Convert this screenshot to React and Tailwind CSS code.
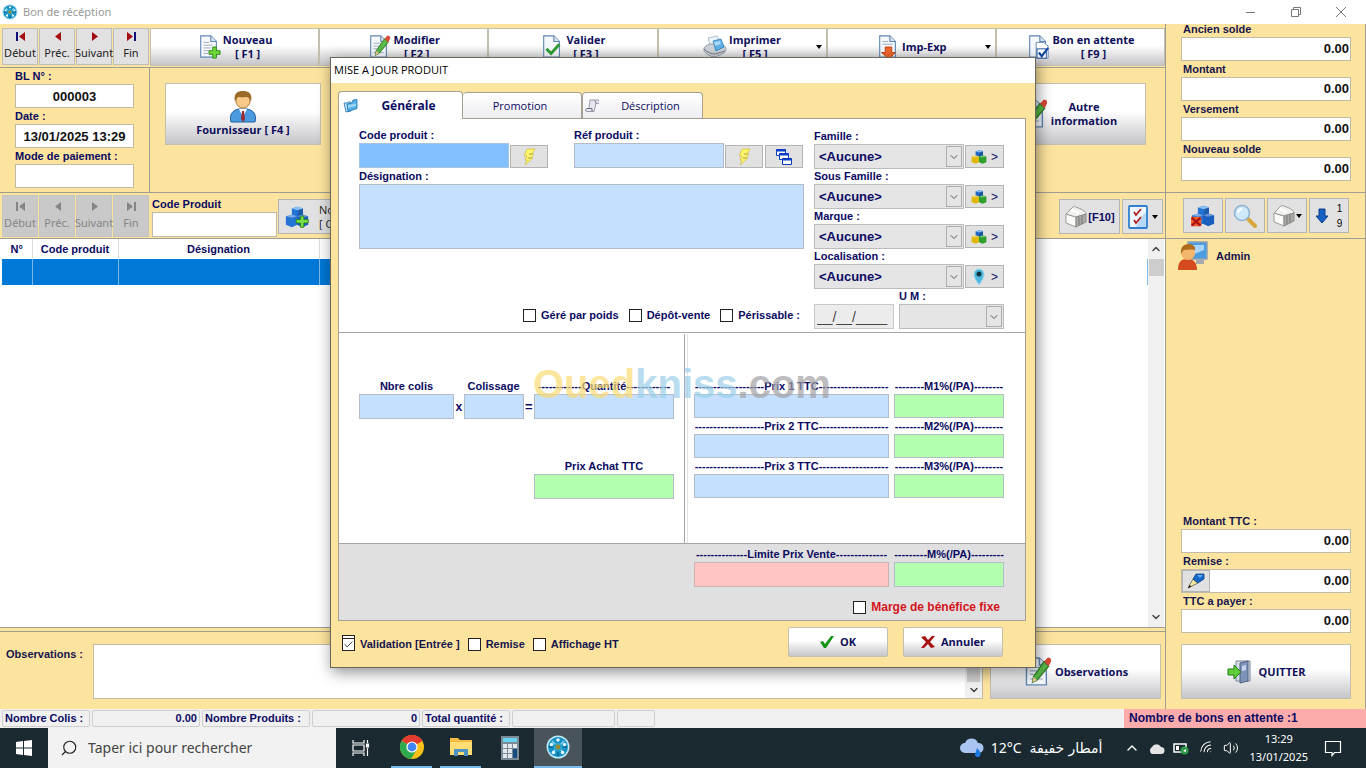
import React, { useId } from "react";
import { Check, ChevronDown, ChevronUp, Search, Wifi, Volume2 } from "lucide-react";
import clsx from "clsx";

const toolbarActions = [
  { name: "Nouveau", shortcut: "[ F1 ]", icon: "add" },
  { name: "Modifier", shortcut: "[ F2 ]", icon: "edit" },
  { name: "Valider", shortcut: "[ F3 ]", icon: "check" },
  { name: "Imprimer", shortcut: "[ F5 ]", icon: "printer", menu: true },
  { name: "Imp-Exp", icon: "export", menu: true },
  { name: "Bon en attente", shortcut: "[ F9 ]", icon: "pending" },
];

const balances = ["Ancien solde", "Montant", "Versement", "Nouveau solde"];
const families = ["Famille :", "Sous Famille :", "Marque :", "Localisation :"];
const prices = ["1", "2", "3"];

const glossy = "border border-[#c3bfae] bg-linear-to-b from-white from-45% to-[#c6c6ca] font-['Open_Sans',sans-serif] text-[11px] leading-[14px] font-bold text-[#0e0e5a]";
const flat = "border border-[#b4b4b4] bg-[#e1e1e1]";

/* ---------- icons ---------- */

const Globe = ({ className }) => (
  <svg viewBox="0 0 24 24" className={className}>
    <circle cx="12" cy="12" r="11.5" fill="#bfe6f5" />
    <circle cx="12" cy="12" r="10" fill="#1593c7" />
    <path d="M12 3v4M12 17v4M3 12h4M17 12h4" stroke="#0d6f9c" strokeWidth="2" />
    <path d="M6 6l4 4M14 14l4 4M18 6l-4 4M10 14l-4 4" stroke="#8fd3ee" strokeWidth="1.5" />
    <circle cx="12" cy="12" r="4" fill="#2da6cf" />
    <circle cx="12" cy="12" r="2.4" fill="#9a8b2e" />
    <g fill="#e8f9ff">
      <circle cx="12" cy="5" r="1.7" />
      <circle cx="18.500" cy="9.500" r="1.7" />
      <circle cx="16.500" cy="17.500" r="1.7" />
      <circle cx="7.500" cy="17.500" r="1.7" />
      <circle cx="5.500" cy="9.500" r="1.7" />
    </g>
  </svg>
);

const Sheet = ({ kind, className = "size-6" }) => (
  <svg viewBox="0 0 24 26" className={className}>
    <path d="M3 1h11l6 6v17H3z" fill="#f6f9fc" stroke="#5f86b2" strokeWidth="1.2" />
    <path d="M14 1v6h6" fill="#dbe7f3" stroke="#5f86b2" strokeWidth="1.2" />
    {kind === "add" && (
      <>
        <path d="M6 8h6M6 11h10M6 14h8M6 17h6M6 20h5" stroke="#9aa9ba" />
        <path d="M16 13h4v4h4v4h-4v4h-4v-4h-4v-4h4z" fill="#6fd63a" stroke="#2c8a17" />
      </>
    )}
    {kind === "edit" && (
      <>
        <path d="M6 9h8M6 12h6M6 15h4M6 19h11" stroke="#9aa9ba" />
        <path d="M18 4l4 4-10 12-4 2 1-5z" fill="#58b947" stroke="#2c7a20" />
        <path d="M18 4l2-2a2 2 0 0 1 4 2l-2 4z" fill="#d8473a" />
        <path d="M9 17l3 3-4 2z" fill="#f0c896" />
      </>
    )}
    {kind === "check" && <path d="M6 15l5 5 9-10" fill="none" stroke="#2f9e34" strokeWidth="3.2" />}
    {kind === "export" && (
      <>
        <path d="M6 7h6M6 10h11" stroke="#9aa9ba" />
        <path d="M9 13h7v6h4l-7 7-8-7h4z" fill="#f2662b" stroke="#c2410c" />
      </>
    )}
    {kind === "pending" && (
      <>
        <path d="M10 8h8l5 4v13H10z" fill="#fff" stroke="#5f86b2" />
        <rect x="11" y="15" width="10" height="10" fill="#fff" stroke="#1d4e9b" />
        <path d="M13 19l3 4 7-9" fill="none" stroke="#14489c" strokeWidth="2.4" />
      </>
    )}
  </svg>
);

const Printer = ({ className = "size-6" }) => (
  <svg viewBox="0 0 24 24" className={className}>
    <path d="M5 3l9-2 4 8-10 4z" fill="#eef4fa" stroke="#9fb3c8" strokeWidth=".8" />
    <path d="M1 13c2-3 5-4 8-4l11 1c2 1 3 3 3 5l-2 3-9 4c-4 0-9-3-11-6z" fill="#cdd3da" stroke="#848d97" strokeWidth=".8" />
    <path d="M1 14c3 3 7 5 11 5l10-3" fill="none" stroke="#727b86" />
    <path d="M10 6l8-2 3 8-8 4z" fill="#5fb1e8" stroke="#2e7fb9" strokeWidth=".8" />
    <path d="M11 7l6-1 1 3-6 2z" fill="#a9d8f7" />
  </svg>
);

const Person = () => (
  <svg viewBox="0 0 28 32" className="h-8 w-7">
    <path d="M2 31c-2-8 2-12 8-13h8c6 1 10 5 8 13z" fill="#4a9be0" stroke="#1f5f9f" />
    <path d="M10 18l4 8 4-8z" fill="#fff" />
    <path d="M13 20h2l1 8-2 3-2-3z" fill="#9b2a34" />
    <circle cx="14" cy="10" r="7" fill="#f7c98b" stroke="#bd7c35" />
    <path d="M6 11C4 2 9 0 14 0s10 2 8 11c-1-4-3-5-5-5-4 1-7 0-8 0-2 1-2 3-3 5z" fill="#9a6a26" />
  </svg>
);

const Cubes = ({ mark, colors = ["#2474d6", "#2474d6", "#1a5ec0"], className = "size-6" }) => (
  <svg viewBox="0 0 28 26" className={className}>
    <path d="M8 3l7-2 6 2v10l-6 2-7-2z" fill={colors[0]} />
    <path d="M8 3l7-2 6 2-6 2z" fill="#8cc1f7" />
    <path d="M15 5l6-2v10l-6 2z" fill="#000" opacity=".2" />
    <path d="M1 12l7-2 6 2v10l-6 3-7-3z" fill={colors[1]} />
    <path d="M1 12l7-2 6 2-6 2z" fill="#fff" opacity=".4" />
    <path d="M14 12l7-2 6 2v10l-7 3-6-3z" fill={colors[2]} />
    <path d="M14 12l7-2 6 2-7 2z" fill="#fff" opacity=".35" />
    {mark === "add" && <path d="M18 12h4v4h5v4h-5v5h-4v-5h-5v-4h5z" fill="#7be04a" stroke="#227d12" />}
    {mark === "delete" && (
      <>
        <rect y="14" width="12" height="11" fill="#ef5a32" />
        <path d="M1 15l10 9M11 15L1 24" stroke="#a80f0f" strokeWidth="2.5" />
      </>
    )}
  </svg>
);

const Box = () => (
  <svg viewBox="0 0 24 24" className="size-6 shrink-0">
    <path d="M2 9l10 3v10L2 18z" fill="#fbfbfa" stroke="#9b9b97" />
    <path d="M2 9l5-5c1-2 3-3 5-2l5 2c2 1 5 3 5 5l-10 3z" fill="#f0f0ee" stroke="#9b9b97" />
    <path d="M12 12l10-3v8l-10 5z" fill="#a9aaa5" stroke="#8c8c88" />
    <path d="M15 12v8M18 11v8" stroke="#7a7b76" />
    <path d="M7 5l8 3" stroke="#fff" strokeWidth="2" />
  </svg>
);

const Bolt = () => (
  <svg viewBox="0 0 16 18" className="h-[18px] w-4">
    <path d="M6 1h8l-3 5h2l-3 4h2l-8 7 2-5H4l2-4H3z" fill="#fdf56a" stroke="#d2bf45" strokeWidth=".8" />
    <path d="M11 6H8M10 10H7" stroke="#8f8540" strokeWidth=".8" />
  </svg>
);

const Windows = () => (
  <svg viewBox="0 0 18 18" className="size-[18px]" fill="#fff" stroke="#0b3cc4">
    <path d="M1.500 1.500h9v6h-9z" />
    <path d="M1 2.500h10" strokeWidth="2" />
    <path d="M4.500 5.500h9v6h-9z" />
    <path d="M4 6.500h10" strokeWidth="2" />
    <path d="M7.500 10.500h9v6h-9z" />
    <path d="M7 11.500h10" strokeWidth="2" />
  </svg>
);

const Pin = () => (
  <svg viewBox="0 0 16 18" className="h-[18px] w-4">
    <path d="M8 17C4 11 3 9 3 6a5 5 0 0 1 10 0c0 3-1 5-5 11z" fill="#4db8dc" stroke="#a4dbef" />
    <circle cx="8" cy="6" r="2.5" fill="#0c3346" />
  </svg>
);

const Checklist = () => (
  <svg viewBox="0 0 20 24" className="h-6 w-5">
    <rect x="1" y="1" width="18" height="22" rx="1" fill="#eef7ff" stroke="#2f7ed0" strokeWidth="1.8" />
    <path d="M13 12l5-5v15H8z" fill="#8fc3ee" opacity=".6" />
    <path d="M6 7l2 3 5-6M6 15l2 3 5-6" fill="none" stroke="#b32020" strokeWidth="1.8" />
  </svg>
);

const Magnifier = () => (
  <svg viewBox="0 0 24 24" className="size-6">
    <path d="M15 15l7 7" stroke="#d7a83b" strokeWidth="4" strokeLinecap="round" />
    <circle cx="9" cy="9" r="7.5" fill="#cfe9fb" stroke="#8fb2d4" strokeWidth="1.6" />
    <path d="M5 9a4 4 0 0 1 4-4" stroke="#fff" strokeWidth="2" fill="none" />
  </svg>
);

const ArrowDownBlue = () => (
  <svg viewBox="0 0 14 16" className="h-4 w-3.5">
    <path d="M4 1h6v7h3l-6 7-6-7h3z" fill="#1461c4" stroke="#0c3f87" />
  </svg>
);

const UserPc = () => (
  <svg viewBox="0 0 30 30" className="size-[30px]">
    <path d="M10 1h19v17H12z" fill="#4c9de0" stroke="#8fa1b4" strokeWidth="1.5" />
    <path d="M13 4h13v5l-12 5z" fill="#a9d5f7" />
    <path d="M18 19h8v4h-8z" fill="#a3a9b0" />
    <path d="M0 29c0-8 3-11 9-11s10 3 10 11z" fill="#d4491d" />
    <circle cx="10" cy="12" r="7" fill="#f3b66a" />
    <path d="M3 13C2 5 7 3 11 3s7 3 6 6c-4-1-8 0-11 0-1 1-2 2-3 4z" fill="#b06c1c" />
  </svg>
);

const Door = () => (
  <svg viewBox="0 0 24 24" className="size-6">
    <path d="M9 1h14v20H9z" fill="#d8dde6" stroke="#7a869a" />
    <path d="M13 3l8-2v20l-8 2z" fill="#7f93b8" stroke="#4f5f80" />
    <path d="M15 6l4-1v5l-4 1z" fill="#c7d6ee" />
    <path d="M1 9h6V5l7 7-7 7v-4H1z" fill="#5fce3a" stroke="#237a12" />
  </svg>
);

const Marker = () => (
  <svg viewBox="0 0 18 16" className="h-4 w-[18px]">
    <path d="M1 15l5-9 5 4z" fill="#f5e7a0" stroke="#5d5d4d" strokeWidth=".8" />
    <path d="M6 6l3-5 8 0v5l-6 4z" fill="#1668c9" stroke="#0e3f80" strokeWidth=".8" />
    <path d="M10 2l6 0-3 3z" fill="#5fa8ee" />
    <path d="M1 15l1.500-3 2 1.500z" fill="#111" />
  </svg>
);

const Folder = () => (
  <svg viewBox="0 0 16 14" className="h-3.5 w-4">
    <path d="M1 4l3 0 1-1 3 0v9l-5 1z" fill="#bfe2f7" stroke="#1d72ad" strokeWidth=".8" />
    <path d="M4 5l5-1 1-3 4-.500v9L5 12.500z" fill="#55b0e6" stroke="#1d72ad" strokeWidth=".8" />
    <path d="M5 6l8-1.500v2.500L5 9z" fill="#9dd5f5" />
  </svg>
);

const Scroll = () => (
  <svg viewBox="0 0 14 14" className="size-3.5">
    <path d="M5 1h7a1.500 1.500 0 0 1 1 3.500h-2L9 12.500H2a1.500 1.500 0 0 1 0-3h2z" fill="#e6e6ee" stroke="#85859a" strokeWidth=".8" />
    <path d="M2 9.500h5v3M11 4.500l-1-3" stroke="#55556a" fill="none" strokeWidth=".8" />
  </svg>
);

const Caret = () => <span className="border-x-3 border-t-4 border-x-transparent border-t-black" />;

/* ---------- form parts ---------- */

const Nav = ({ disabled }) => (
  <div className="flex gap-px pl-0.5">
    {[
      ["Début", "M3 0v9M12 0v9L6 4.5z"],
      ["Préc.", "M11 0v9L5 4.5z"],
      ["Suivant", "M5 0v9l6-4.5z"],
      ["Fin", "M12 0v9M3 0v9l6-4.5z"],
    ].map(([name, d]) => (
      <button
        key={name}
        disabled={disabled}
        className={clsx(
          "flex w-9 flex-col items-center justify-center gap-1 border font-['Noto_Sans',sans-serif] text-[11px] leading-4 font-normal",
          disabled ? "h-[42px] border-[#c4c4c4] bg-[#c9c9c9] text-[#858585]" : "h-[37px] border-[#bdbdbd] bg-[#e1e1e1] text-[#222]"
        )}
      >
        <svg viewBox="0 0 15 9" className="h-[9px] w-[15px]">
          <path d={d} fill={disabled ? "#858585" : "#a40c12"} />
          {name === "Début" && <path d="M3 0h2v9H3z" fill={disabled ? "#858585" : "#10107a"} />}
          {name === "Fin" && <path d="M10 0h2v9h-2z" fill={disabled ? "#858585" : "#10107a"} />}
        </svg>
        {name}
      </button>
    ))}
  </div>
);

const Field = ({ label, className, box = "border-[#b3bcc6] bg-[#c4e0fe]", size = "h-[25px]", center, ...rest }) => {
  const id = useId();
  return (
    <div className={clsx("flex flex-col", className)}>
      <label htmlFor={id} className={clsx("h-4 overflow-hidden leading-4 whitespace-nowrap", center && "flex justify-center")}>
        {label}
      </label>
      <input id={id} className={clsx("w-full border px-1 outline-none", size, box)} {...rest} />
    </div>
  );
};

const dashed = (text, n) => "-".repeat(n) + text + "-".repeat(n);

const Amount = ({ label, children }) => {
  const id = useId();
  return (
    <div className="h-10 text-[#15154e]">
      <label htmlFor={id} className="block h-4 pl-0.5 leading-4">{label}</label>
      <div className="flex h-6 border border-[#c0bba8] bg-white">
        {children}
        <input id={id} defaultValue="0.00" className="w-full min-w-0 pr-px text-right text-[13px] text-[#111] outline-none" />
      </div>
    </div>
  );
};

const Combo = ({ id, value, className }) => (
  <div className={clsx("relative h-[25px]", className)}>
    <select id={id} defaultValue={value} className="h-full w-full appearance-none border border-[#bcbcbc] bg-[#e5e5e5] pl-1 text-[13px] outline-none">
      <option>{value}</option>
    </select>
    <span className="pointer-events-none absolute inset-y-0.5 right-0.5 flex w-4 items-center justify-center border border-[#adadad] bg-[#e5e5e5]">
      <ChevronDown className="size-3 text-[#555]" />
    </span>
  </div>
);

const Tick = ({ label, checked, className }) => (
  <label className={clsx("flex items-center gap-[5px] whitespace-nowrap", className)}>
    <span className="relative size-[13px]">
      {checked && <span className="absolute -top-[3px] left-0 h-1 w-[13px] border border-[#222] bg-white" />}
      <input type="checkbox" defaultChecked={checked} className="block size-[13px] appearance-none border border-[#222] bg-white" />
      {checked && <Check className="pointer-events-none absolute inset-px size-[11px] text-[#222]" />}
    </span>
    {label}
  </label>
);

const StatusCell = ({ className, children }) => (
  <div className={clsx("h-[17px] rounded-xs border border-[#cfcfcf] px-0.5 leading-[15px] whitespace-nowrap", className)}>{children}</div>
);

/* ---------- window areas ---------- */

const LeftPane = () => (
  <div className="flex min-w-0 flex-1 flex-col border-r border-[#9f9c92]">
    <div className="flex h-11 items-start border-b border-[#9f9c92] pt-1">
      <Nav />
      <div className="ml-px flex flex-1">
        {toolbarActions.map((action) => (
          <button key={action.name} className={clsx(glossy, "relative flex h-[38px] flex-1 items-center justify-center gap-0.5 border-[#b8b8b8]")}>
            {action.icon === "printer" ? <Printer /> : <Sheet kind={action.icon} />}
            <span>
              {action.name}
              {action.shortcut && <span className="block">{action.shortcut}</span>}
            </span>
            {action.menu && <span className="absolute right-1 flex"><Caret /></span>}
          </button>
        ))}
      </div>
    </div>

    <div className="flex h-[125px] border-b border-[#9f9c92]">
      <div className="flex w-[150px] flex-col border-r border-[#9f9c92] px-[15px]">
        <Field label="BL N° :" size="h-6" box="border-[#c0bba8] bg-white text-center text-[13px] text-[#111]" defaultValue="000003" />
        <Field label="Date :" size="h-6" box="border-[#c0bba8] bg-white text-center text-[13px] text-[#111]" defaultValue="13/01/2025 13:29" />
        <Field label="Mode de paiement :" size="h-6" box="border-[#c0bba8] bg-white" />
      </div>
      <div className="flex flex-1 justify-between py-[15px] pr-[19px] pl-[15px]">
        <button className={clsx(glossy, "flex h-[62px] w-[156px] flex-col items-center justify-center")}>
          <Person />
          Fournisseur [ F4 ]
        </button>
        <button className={clsx(glossy, "flex h-[62px] w-[156px] items-center justify-center gap-1")}>
          <Sheet kind="edit" className="h-8 w-7" />
          <span>Autre<br />information</span>
        </button>
      </div>
    </div>

    <div className="flex h-[46px] items-start border-b border-[#9f9c92] pt-0.5">
      <Nav disabled />
      <Field label="Code Produit" className="ml-[3px] w-[125px] pt-px" box="border-[#c0bba8] bg-white" />
      <button className={clsx(flat, "mt-1 ml-px flex h-[35px] w-40 items-center gap-2.5 pl-1.5 text-left font-['Open_Sans',sans-serif] text-[11px] leading-[14px] font-normal text-[#222]")}>
        <Cubes mark="add" />
        <span>Nouveau<br />[ Ctrl+N ]</span>
      </button>
      <div className="mt-1 mr-0.5 ml-auto flex gap-0.5">
        <button className={clsx(flat, "flex h-[35px] w-[61px] items-center justify-center")}><Box />[F10]</button>
        <button className={clsx(flat, "flex h-[35px] w-[41px] items-center justify-center gap-1")} aria-label="Sélection">
          <Checklist />
          <Caret />
        </button>
      </div>
    </div>

    <div className="flex flex-1 border-b border-[#9f9c92] bg-white">
      <div className="flex-1">
        <table className="w-full table-fixed border-l-2 border-white">
          <colgroup>
            <col className="w-[31px]" />
            <col className="w-[86px]" />
            <col className="w-[201px]" />
            <col />
          </colgroup>
          <thead>
            <tr className="h-5 divide-x divide-[#dcdcdc]">
              <th>N°</th>
              <th>Code produit</th>
              <th>Désignation</th>
              <th />
            </tr>
          </thead>
          <tbody>
            {/* the selected line stops where the last column does */}
            <tr className="h-[26px] divide-x divide-[#7db8ea]">
              <td className="bg-[#0078d7]" />
              <td className="bg-[#0078d7]" />
              <td className="bg-[#0078d7]" />
              <td className="bg-linear-to-r from-[#0078d7] from-80% to-white to-80%" />
            </tr>
          </tbody>
        </table>
      </div>
      <div className="mr-px flex w-4 flex-col items-center bg-[#f0f0f0]">
        <ChevronUp className="my-1 size-3 text-[#444]" strokeWidth={3} />
        <div className="h-[17px] w-[15px] bg-[#cdcdcd]" />
        <ChevronDown className="mt-auto mb-1 size-3 text-[#444]" strokeWidth={3} />
      </div>
    </div>
    <div className="h-1 border-b border-[#9f9c92]" />

    <div className="flex h-[77px] items-start pt-3 pr-1">
      <label htmlFor="observations" className="w-[93px] py-0.5 pl-1.5 text-[#15154e]">Observations :</label>
      <div className="flex h-[55px] flex-1 border border-[#c0bba8] bg-white">
        <textarea id="observations" className="flex-1 resize-none outline-none" />
        <div className="flex w-[17px] flex-col items-center justify-end bg-[#f0f0f0]">
          <div className="h-8 w-[13px] bg-[#cdcdcd]" />
          <ChevronDown className="my-0.5 size-3 text-[#444]" strokeWidth={3} />
        </div>
      </div>
      <button className={clsx(glossy, "ml-[7px] flex h-[55px] w-[171px] items-center justify-center gap-1")}>
        <Sheet kind="edit" className="h-8 w-7" />
        Observations
      </button>
    </div>
  </div>
);

const RightPane = () => (
  <div className="flex w-[200px] flex-col border-r border-[#9f9c92]">
    <div className="h-[169px] border-b border-[#9f9c92] pr-[14px] pl-[15px]">
      <div className="-mt-[3px]">
        {balances.map((label) => <Amount key={label} label={label} />)}
      </div>
    </div>
    <div className="flex h-[46px] items-center justify-center gap-0.5 border-b border-[#9f9c92]">
      <button className={clsx(flat, "flex h-[35px] w-10 items-center justify-center")} aria-label="Supprimer"><Cubes mark="delete" /></button>
      <button className={clsx(flat, "flex h-[35px] w-10 items-center justify-center")} aria-label="Rechercher"><Magnifier /></button>
      <button className={clsx(flat, "flex h-[35px] w-10 items-center justify-center")} aria-label="Produit"><Box /><Caret /></button>
      <button className={clsx(flat, "flex h-[35px] w-10 items-center justify-center gap-2 text-[10px] leading-[15px] font-normal text-black")}>
        <ArrowDownBlue />
        <span>1<br />9</span>
      </button>
    </div>
    <div className="flex items-center gap-2 pt-0.5 pl-3 text-[#15154e]">
      <UserPc />
      Admin
    </div>
    <div className="mt-auto h-[196px] pr-[14px] pl-[15px]">
      <Amount label="Montant TTC :" />
      <Amount label="Remise :">
        <button className={clsx(flat, "flex w-7 shrink-0 items-center justify-center")} aria-label="Modifier la remise"><Marker /></button>
      </Amount>
      <Amount label="TTC a payer :" />
      <button className={clsx(glossy, "mt-[11px] flex h-[55px] w-full items-center justify-center gap-2")}>
        <Door />
        QUITTER
      </button>
    </div>
  </div>
);

const ProductDialog = () => (
  <div className="absolute top-[57px] left-1/2 w-[706px] -translate-x-1/2 border border-[#6b675a] bg-[#fde49e] text-[#0a0a62] shadow-[2px_4px_14px_rgba(0,0,0,0.45)]">
    <h2 className="h-[25px] bg-white pl-[3px] font-['Open_Sans',sans-serif] text-[11px] leading-6 font-normal text-black">MISE A JOUR PRODUIT</h2>

    <div className="flex items-end px-[7px] pt-2">
      <button className="z-10 -mb-px flex h-7 w-[125px] items-center rounded-t-sm border border-b-0 border-[#a5a294] bg-white pl-1">
        <Folder />
        <span className="flex-1 pr-1 font-['Open_Sans',sans-serif] text-xs">Générale</span>
      </button>
      <button className="h-[26px] w-[119px] rounded-t-sm border border-b-0 border-l-0 border-[#a5a294] bg-linear-to-b from-white to-[#eeeef2] pr-1 font-['Open_Sans',sans-serif] text-[11px] font-normal">Promotion</button>
      <button className="flex h-[26px] w-[121px] items-center rounded-t-sm border border-b-0 border-[#a5a294] bg-linear-to-b from-white to-[#eeeef2] pl-0.5 font-['Open_Sans',sans-serif] text-[11px] font-normal">
        <Scroll />
        <span className="flex-1">Déscription</span>
      </button>
    </div>

    <div className="mr-[9px] ml-[7px] border border-[#a5a294] bg-white">
      <div className="flex h-[214px] gap-2.5 border-b border-[#a5a5a5] pt-[9px] pr-[21px] pl-5">
        <div className="flex flex-1 flex-col">
          <div className="flex h-10 items-end">
            <Field label="Code produit :" className="w-[150px]" box="border-[#a5c3e2] bg-[#82bfff]" />
            <button className={clsx(flat, "ml-px flex h-[23px] w-[38px] items-center justify-center")} aria-label="Générer le code"><Bolt /></button>
            <Field label="Réf produit :" className="ml-[26px] w-[150px]" />
            <button className={clsx(flat, "ml-px flex h-[23px] w-[38px] items-center justify-center")} aria-label="Générer la référence"><Bolt /></button>
            <button className={clsx(flat, "ml-0.5 flex h-[23px] w-[38px] items-center justify-center")} aria-label="Références"><Windows /></button>
          </div>
          <label htmlFor="designation" className="h-4 leading-4">Désignation :</label>
          <textarea id="designation" className="h-[65px] resize-none border border-[#b3bcc6] bg-[#c4e0fe] outline-none" />
          <div className="mt-auto mb-[9px] flex justify-end gap-2.5 pr-1">
            <Tick label="Géré par poids" />
            <Tick label="Dépôt-vente" />
            <Tick label="Périssable :" />
          </div>
        </div>
        <div className="w-[190px]">
          {families.map((label) => (
            <div key={label} className="h-10">
              <label htmlFor={label} className="block h-4 leading-4">{label}</label>
              <div className="flex items-center gap-px">
                <Combo id={label} value="<Aucune>" className="w-[150px]" />
                <button className={clsx(flat, "flex h-[23px] flex-1 items-center justify-center gap-1 text-xs font-normal")}>
                  {label === "Localisation :" ? <Pin /> : <Cubes className="size-4" colors={["#2068c8", "#e0b80c", "#2f9e2c"]} />}
                  &gt;
                </button>
              </div>
            </div>
          ))}
          <div className="flex items-end gap-[5px]">
            <input aria-label="Date de péremption" defaultValue="__/__/____" className="h-[25px] w-20 border border-[#c8c8c8] bg-[#ececec] px-0.5 text-sm font-normal text-[#444] outline-none" />
            <div className="flex-1">
              <label htmlFor="um" className="block h-4 leading-4">U M :</label>
              <Combo id="um" value="" />
            </div>
          </div>
        </div>
      </div>

      <div className="flex h-[210px] pt-px">
        <div className="w-[346px] border-r border-[#a5a5a5] pt-11 pr-2.5 pl-5">
          <div className="flex items-end justify-between">
            <Field center label="Nbre colis" className="w-[95px]" />
            <span className="pb-1 text-xs">x</span>
            <Field center label="Colissage" className="w-[60px]" />
            <span className="pb-1 text-[13px]">=</span>
            <Field center label={dashed("Quantité", 12)} className="w-[140px]" />
          </div>
          <Field center label="Prix Achat TTC" className="mt-[39px] ml-auto w-[140px]" box="border-[#b3bcc6] bg-[#b5ffb0]" />
        </div>
        <div className="ml-0.5 flex-1 border-l border-[#e4e4e4] pt-11 pr-[21px] pl-1.5">
          {prices.map((n) => (
            <div key={n} className="flex h-10 gap-[5px]">
              <Field center label={dashed(`Prix ${n} TTC`, 19)} className="w-[195px]" />
              <Field center label={dashed(`M${n}%(/PA)`, 8)} className="flex-1" box="border-[#b3bcc6] bg-[#b5ffb0]" />
            </div>
          ))}
        </div>
      </div>

      <div className="flex h-[77px] flex-col items-end border-t border-[#a5a5a5] bg-[#e0e0e0] pt-0.5 pr-[21px]">
        <div className="flex w-[310px] gap-[5px]">
          <Field center label={dashed("Limite Prix Vente", 14)} className="w-[195px]" box="border-[#c9b3b3] bg-[#ffc4c4]" />
          <Field center label={dashed("M%(/PA)", 9)} className="flex-1" box="border-[#b3bcc6] bg-[#b5ffb0]" />
        </div>
        <Tick label="Marge de bénéfice fixe" className="mt-3 mr-1 text-xs text-[#d41420]" />
      </div>
    </div>

    <div className="flex h-[46px] items-center justify-between pr-8 pl-[11px] text-[#15154e]">
      <div className="flex gap-2">
        <Tick label="Validation [Entrée ]" checked />
        <Tick label="Remise" />
        <Tick label="Affichage HT" />
      </div>
      <div className="flex gap-[15px] pb-1">
        <button className={clsx(glossy, "flex h-[30px] w-[100px] items-center justify-center gap-1.5 rounded-xs")}>
          <svg viewBox="0 0 14 12" className="h-3 w-3.5"><path d="M0 6l3-1 2 3 6-8h3L6 12H4z" fill="#149414" /></svg>
          OK
        </button>
        <button className={clsx(glossy, "flex h-[30px] w-[100px] items-center justify-center gap-1.5 rounded-xs")}>
          <svg viewBox="0 0 14 12" className="h-3 w-3.5"><path d="M0 1l4-1 3 4 4-4h3L9 6l5 5-4 1-3-4-4 4H0l5-6z" fill="#a80f0f" /></svg>
          Annuler
        </button>
      </div>
    </div>

    <div aria-hidden="true" className="pointer-events-none absolute top-[304px] left-[202px] font-['Liberation_Sans',sans-serif] text-[40px] leading-[44px] font-bold opacity-70">
      <span className="text-[#fbdc74]">Oued</span>
      <span className="text-[#9ccfe8]">kniss</span>
      <span className="text-[#a2a2a6]">.com</span>
    </div>
  </div>
);

const Taskbar = () => (
  <div className="flex h-10 items-center bg-[#1a2a30] font-['Noto_Sans',sans-serif] text-white">
    <button className="flex h-full w-12 items-center justify-center" aria-label="Démarrer">
      <svg viewBox="0 0 16 16" className="size-4"><path d="M0 2l7-1v6.500H0zM8 1l8-1v7.500H8zM0 8.500h7V15l-7-1zM8 8.500h8V16l-8-1z" fill="#fff" /></svg>
    </button>
    <label className="flex h-full w-[288px] items-center gap-2.5 bg-[#f2f2f2] pl-3">
      <Search className="size-[18px] -scale-x-100 text-[#222]" strokeWidth={1.5} />
      <input placeholder="Taper ici pour rechercher" className="flex-1 text-sm font-normal outline-none placeholder:text-[#444]" />
    </label>
    <button className="mr-1.5 flex h-full w-[49px] items-center justify-center" aria-label="Vue des tâches">
      <svg viewBox="0 0 18 16" className="h-4 w-[18px]" fill="none" stroke="#fff" strokeWidth="1.2">
        <path d="M1 0v3h11V0M1 16v-3h11v3M1 5h11v6H1zM15.500 0v3M15.500 8v8" />
        <path d="M14.500 4h2v3h-2z" fill="#fff" />
      </svg>
    </button>
    <button className="mr-2 flex h-full w-[41px] items-center justify-center border-b-2 border-[#76b9ed]" aria-label="Chrome">
      <svg viewBox="0 0 24 24" className="size-6">
        <circle cx="12" cy="12" r="12" fill="#fbc116" />
        <path d="M12 12L1.600 6A12 12 0 0 1 22.400 6z" fill="#e33b2e" />
        <path d="M12 12l-10.400-6A12 12 0 0 0 11 24l5.500-9z" fill="#2da94f" />
        <path d="M12 6h10.400A12 12 0 0 0 12 0z" fill="#e33b2e" />
        <circle cx="12" cy="12" r="5.600" fill="#fff" />
        <circle cx="12" cy="12" r="4.400" fill="#4285f4" />
      </svg>
    </button>
    <button className="mr-2 flex h-full w-[41px] items-center justify-center border-b-2 border-[#76b9ed]" aria-label="Explorateur">
      <svg viewBox="0 0 22 20" className="h-5 w-[22px]">
        <path d="M0 1h8l2 2h12v15H0z" fill="#f2bd42" />
        <path d="M0 5h22v13H0z" fill="#ffdc74" />
        <path d="M4 12h14v7h-4v-4H8v4H4z" fill="#4f93c0" />
      </svg>
    </button>
    <button className="mr-1 flex h-full w-[41px] items-center justify-center" aria-label="Calculatrice">
      <svg viewBox="0 0 18 24" className="h-6 w-[18px]">
        <path d="M0 0h18v24H0z" fill="#7c8b98" />
        <path d="M2 2h14v4H2z" fill="#67d3ee" />
        <path d="M2 8h4v4H2zM7 8h4v4H7zM12 8h4v4h-4zM2 13h4v4H2zM7 13h4v4H7zM2 18h4v4H2zM7 18h4v4H7z" fill="#e4e9ed" />
        <path d="M12 13h4v9h-4z" fill="#164b80" />
      </svg>
    </button>
    <button className="flex h-full w-12 items-center justify-center border-b-2 border-[#76b9ed] bg-[#485459]" aria-label="Bon de récéption"><Globe className="size-6" /></button>

    <div className="ml-auto flex h-full items-center">
      <svg viewBox="0 0 26 22" className="mr-1.5 h-[22px] w-[26px]">
        <path d="M6 16a5 5 0 0 1 0-10 7 7 0 0 1 13 0 5 5 0 0 1 1 10z" fill="#a9c4f0" />
        <path d="M18 11c4 4 4 6 3 8s-6 1-5-2z" fill="#1f7ae0" />
      </svg>
      <span className="mr-2 text-sm font-normal">12°C</span>
      <span dir="rtl" className="mr-[22px] font-['DejaVu_Sans',sans-serif] text-sm font-normal">أمطار خفيفة</span>
      <ChevronUp className="mr-2 size-4" strokeWidth={2} />
      <svg viewBox="0 0 17 11" className="mr-2 h-[11px] w-[17px]"><path d="M4 11a4 4 0 0 1 0-7 5 5 0 0 1 9 0 3.500 3.500 0 0 1 0 7z" fill="#e4e4e4" /></svg>
      <svg viewBox="0 0 16 13" className="mr-2.5 h-[13px] w-4">
        <path d="M1 2h12v8H1z" fill="none" stroke="#fff" strokeWidth="1.500" />
        <path d="M3 4h3v4H3z" fill="#fff" />
        <circle cx="11.500" cy="8.500" r="4" fill="#2f9b4b" />
        <path d="M10 9l3-2v3z" fill="#fff" />
      </svg>
      <Wifi className="mr-2 size-4 -rotate-45" strokeWidth={1.5} />
      <Volume2 className="mr-2.5 size-4" strokeWidth={1.5} />
      <div className="mr-4 text-center text-[11px] leading-[18px] font-normal">13:29<br />13/01/2025</div>
      <svg viewBox="0 0 18 18" className="mr-6 size-[18px]" fill="none" stroke="#fff" strokeWidth="1.2">
        <path d="M1.500 2.500h15v11h-6l-2.500 3v-3H1.500z" />
      </svg>
    </div>
  </div>
);

const App = () => (
  <div className="relative flex min-h-screen flex-col overflow-hidden bg-[#fde49e] font-['Liberation_Sans',sans-serif] text-[11px] leading-4 font-bold text-[#0a0a62]">
    <header className="flex h-6 items-center bg-white pl-0.5 font-['Noto_Sans',sans-serif] font-normal text-[#999]">
      <Globe className="size-4" />
      <h1 className="ml-[5px] text-[11px]">Bon de récéption</h1>
      <svg viewBox="0 0 104 12" className="mr-[18px] ml-auto h-3 w-[104px]" fill="none" stroke="#777">
        <path d="M2 6.500h9M47.500 3.500h7v7h-7zM49.500 3.500v-2h7v7h-2M92 1l10 10M102 1L92 11" />
      </svg>
    </header>
    <div className="flex flex-1">
      <LeftPane />
      <RightPane />
    </div>
    <footer className="flex h-[19px] items-center gap-0.5 bg-[#f0f0f0] pl-0.5">
      <StatusCell className="w-[88px]">Nombre Colis :</StatusCell>
      <StatusCell className="w-[108px] text-right">0.00</StatusCell>
      <StatusCell className="w-[108px]">Nombre Produits :</StatusCell>
      <StatusCell className="w-[108px] text-right">0</StatusCell>
      <StatusCell className="w-[88px]">Total quantité :</StatusCell>
      <StatusCell className="w-[103px]" />
      <StatusCell className="w-[38px]" />
      <div className="ml-auto h-full w-[242px] bg-[#fdacac] pl-[5px] text-xs leading-[19px]">Nombre de bons en attente :1</div>
    </footer>
    <Taskbar />
    <ProductDialog />
  </div>
);

export default App;
